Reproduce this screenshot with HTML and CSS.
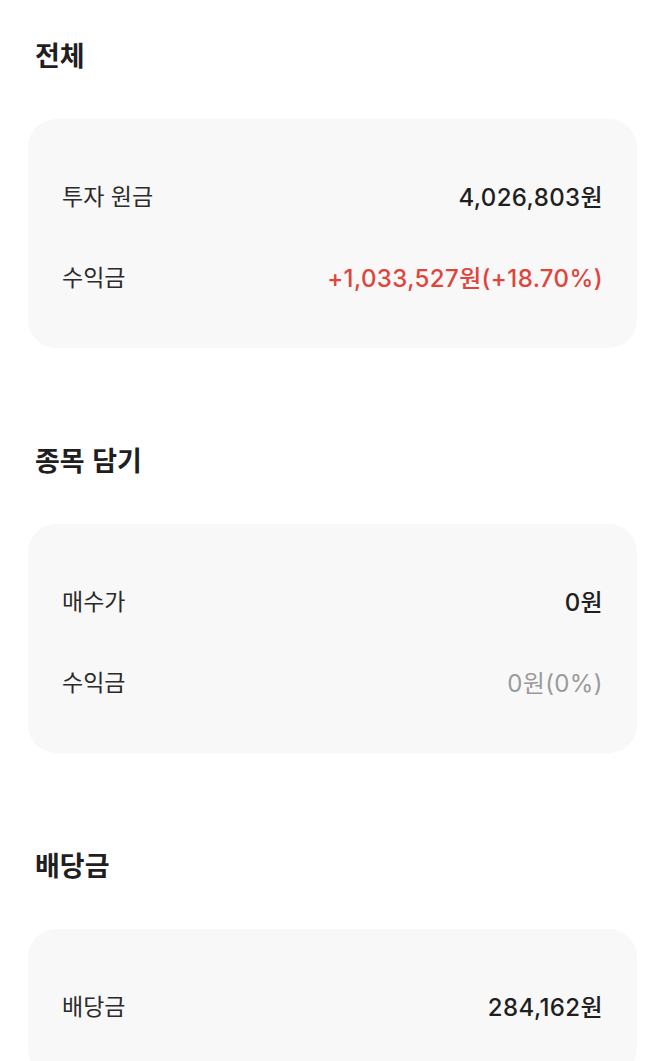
FILE: index.html
```html
<!DOCTYPE html>
<html lang="ko">

<head>
    <meta charset="UTF-8">
    <meta name="viewport" content="width=device-width, initial-scale=1.0">
    <title>포트폴리오 요약</title>
    <link rel="stylesheet" href="styles.css">
</head>

<body>
    <div class="container">
        <section class="section">
            <h2 class="section-title">전체</h2>
            <div class="summary-card">
                <div class="summary-row">
                    <span class="row-label">투자 원금</span>
                    <span class="row-value">4,026,803원</span>
                </div>
                <div class="summary-row">
                    <span class="row-label">수익금</span>
                    <span class="row-value up">+1,033,527원(+18.70%)</span>
                </div>
            </div>
        </section>

        <section class="section">
            <h2 class="section-title">종목 담기</h2>
            <div class="summary-card">
                <div class="summary-row">
                    <span class="row-label">매수가</span>
                    <span class="row-value">0원</span>
                </div>
                <div class="summary-row">
                    <span class="row-label">수익금</span>
                    <span class="row-value muted">0원(0%)</span>
                </div>
            </div>
        </section>

        <section class="section">
            <h2 class="section-title">배당금</h2>
            <div class="summary-card">
                <div class="summary-row">
                    <span class="row-label">배당금</span>
                    <span class="row-value">284,162원</span>
                </div>
            </div>
        </section>
    </div>
</body>

</html>
```

FILE: styles.css
```css
:root {
    --text-color: #1f1f1f;
    --label-color: #2b2b2b;
    --card-background: #f8f8f8;
    --up-color: #e0443b;
    --muted-color: #9a9a9a;
}

* {
    margin: 0;
    padding: 0;
    box-sizing: border-box;
}

body {
    font-family: "Noto Sans CJK KR", "Noto Sans", sans-serif;
    background-color: #ffffff;
    color: var(--text-color);
}

.container {
    padding: 38px 28px 0;
}

.section {
    margin-bottom: 95px;
}

.section-title {
    font-size: 27px;
    line-height: 34px;
    font-weight: 700;
    padding-left: 7px;
    margin-bottom: 47px;
    color: var(--text-color);
}

.summary-card {
    background-color: var(--card-background);
    border-radius: 28px;
    padding: 56px 34px 52px;
    display: flex;
    flex-direction: column;
    gap: 41px;
}

.summary-row {
    display: flex;
    justify-content: space-between;
    align-items: center;
    height: 40px;
}

.row-label {
    font-size: 23px;
    font-weight: 400;
    color: var(--label-color);
}

.row-value {
    font-family: Inter, "Noto Sans CJK KR", sans-serif;
    font-size: 24px;
    font-weight: 500;
    letter-spacing: 0.4px;
}

.row-value.up {
    color: var(--up-color);
}

.row-value.muted {
    color: var(--muted-color);
    font-weight: 400;
}
```
